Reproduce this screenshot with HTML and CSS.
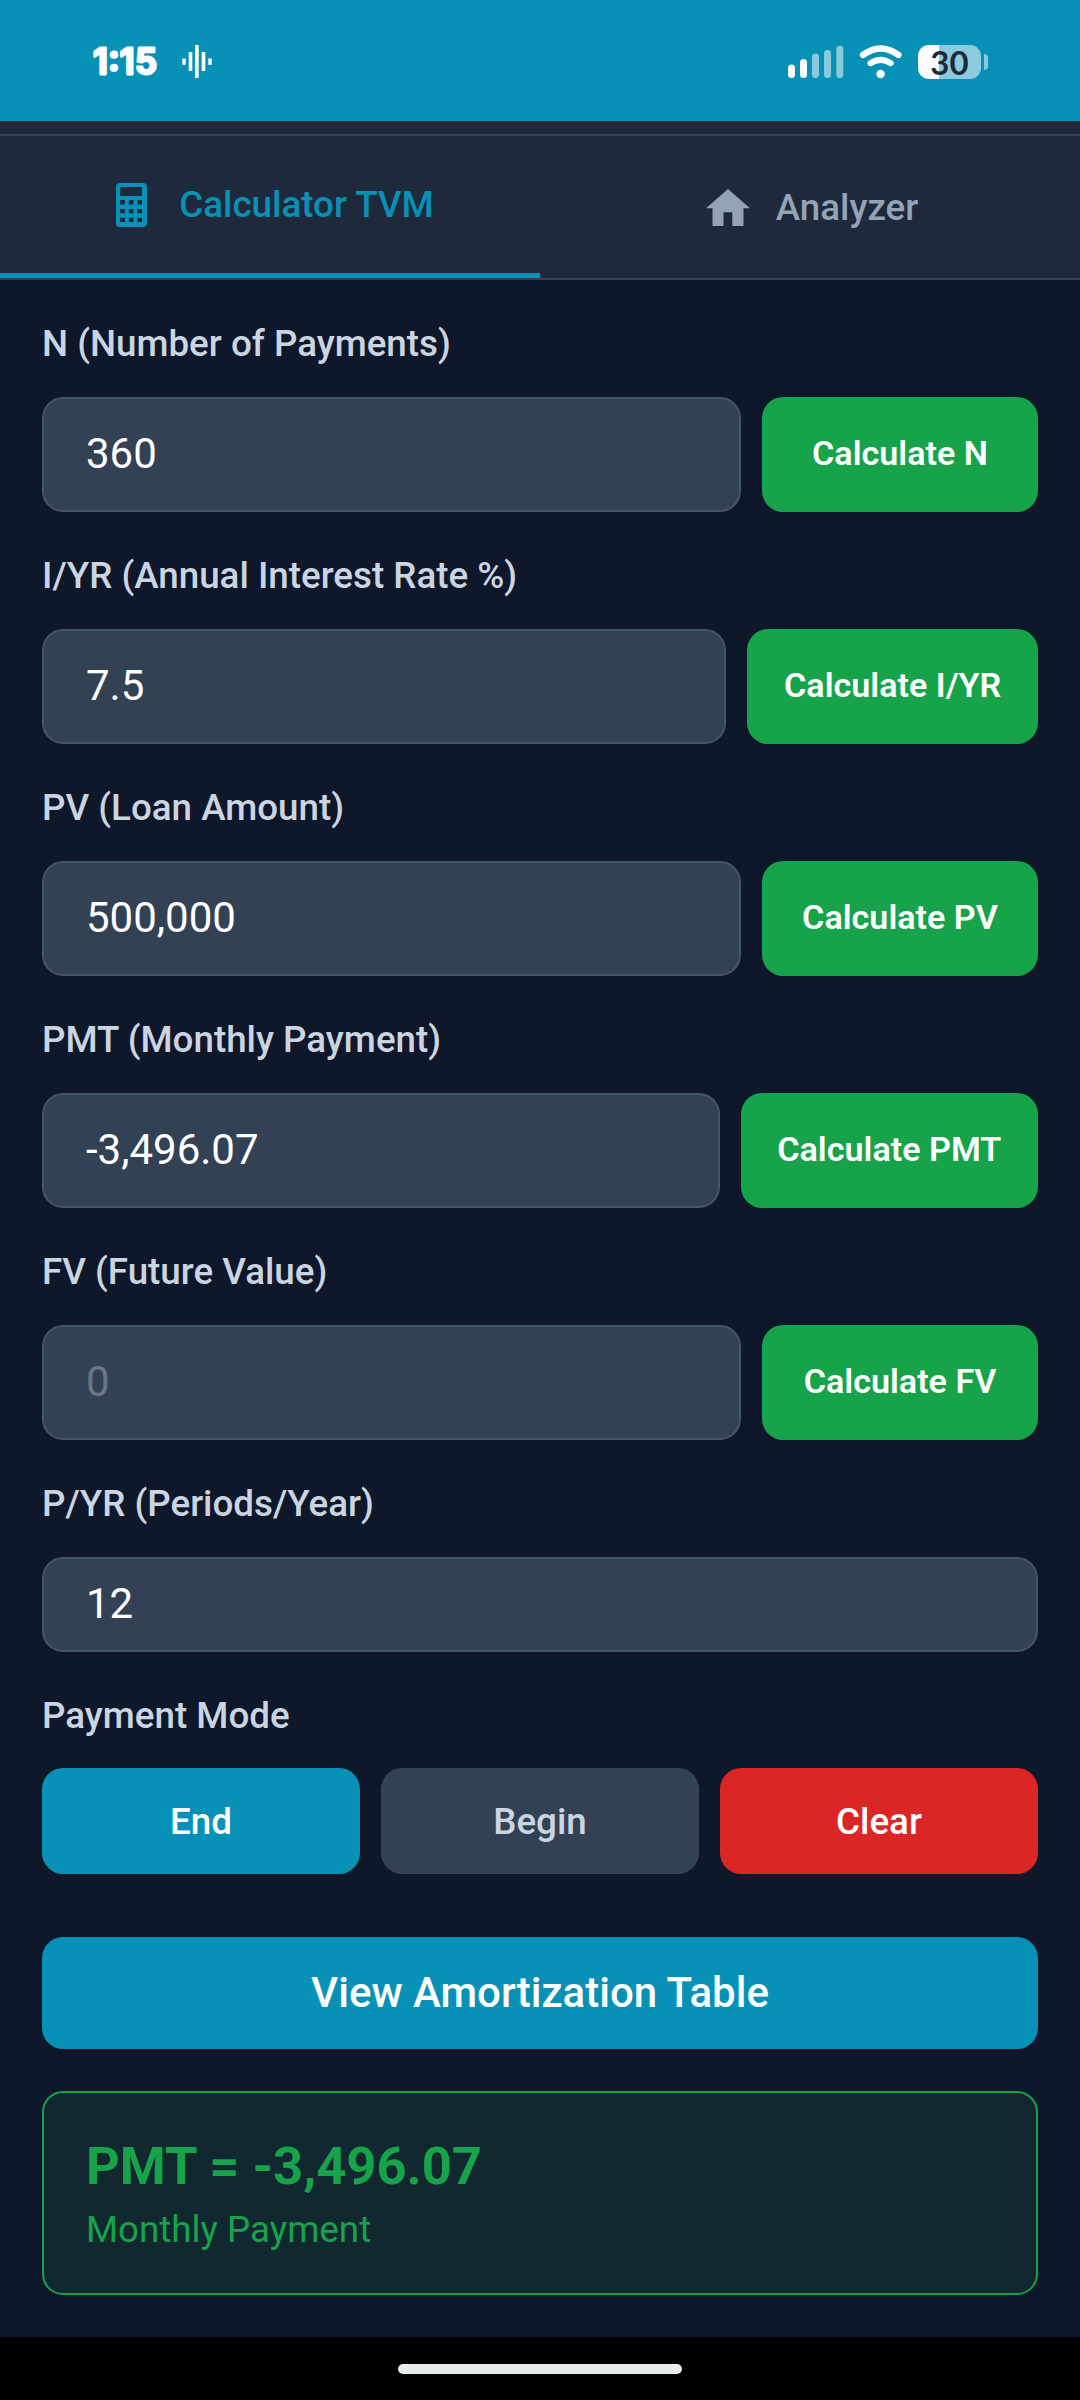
FILE: index.html
```html
<!DOCTYPE html>
<html lang="en">
<head>
<meta charset="utf-8">
<title>Calculator TVM</title>
<link rel="stylesheet" href="styles.css">
</head>
<body>
<div class="screen">
  <header class="status">
    <div class="status-left">
      <svg class="clock" width="90" height="44" viewBox="0 0 90 44"><text x="1" y="33.500" textLength="64">1:15</text></svg>
      <svg class="wave" width="30" height="34" viewBox="0 0 30 34" fill="#fff"><rect x="0.3" y="13.5" width="3.4" height="6.3"/><rect x="6.7" y="7" width="3.6" height="19"/><rect x="13" y="0" width="3.7" height="33"/><rect x="19.7" y="7" width="3.6" height="19"/><rect x="26.3" y="13.5" width="3.4" height="6.3"/></svg>
    </div>
    <div class="status-right">
      <svg width="56" height="34" viewBox="0 0 56 34" fill="#fff"><rect x="0" y="19.5" width="7" height="13.5" rx="3.5"/><rect x="12" y="14" width="7" height="19" rx="3.5"/><g opacity=".52"><rect x="24" y="8.5" width="7" height="24.5" rx="3.5"/><rect x="36" y="5" width="7" height="28" rx="3.5"/><rect x="48.3" y="0.7" width="7" height="32.3" rx="3.5"/></g></svg>
      <svg class="wifi" width="44" height="34" viewBox="0 0 44 34" fill="none" stroke="#fff" stroke-linecap="round"><path d="M4 9.8Q21.7-3 39.4 9.8" stroke-width="6.4"/><path d="M11.5 18.2Q21.7 11.5 31.7 18.2" stroke-width="6"/><circle cx="21.6" cy="29" r="4.2" fill="#fff" stroke="none"/></svg>
      <div class="battery"><div class="battery-body">30</div><i class="battery-tip"></i></div>
    </div>
  </header>
  <nav class="tabs">
    <div class="tab active">
      <svg width="31" height="44" viewBox="0 0 31 44" fill="currentColor" fill-rule="evenodd"><path d="M4 0H27Q31 0 31 4V40Q31 44 27 44H4Q0 44 0 40V4Q0 0 4 0ZM4.200 4.000V13H26V4ZM4.200 17V21.500H9V17ZM12.800 17V21.500H17.500V17ZM21.500 17V21.500H26V17ZM4.200 26V30.300H9V26ZM12.800 26V30.300H17.500V26ZM21.500 26V30.300H26V26ZM4.200 34.700V39H9V34.700ZM12.800 34.700V39H17.500V34.700ZM21.500 34.700V39H26V34.700Z"/></svg>
      <span>Calculator TVM</span>
    </div>
    <div class="tab">
      <svg class="home" width="44" height="37" viewBox="0 0 44 37" fill="currentColor"><path d="M22 0L44 19.300H37.500V37H26.300V23.300H17.500V37H6.500V19.300H0Z"/></svg>
      <span>Analyzer</span>
    </div>
  </nav>
  <main class="form">
    <label class="label">N (Number of Payments)</label>
    <div class="row"><div class="input">360</div><button class="calc">Calculate N</button></div>
    <label class="label">I/YR (Annual Interest Rate %)</label>
    <div class="row"><div class="input">7.5</div><button class="calc">Calculate I/YR</button></div>
    <label class="label">PV (Loan Amount)</label>
    <div class="row"><div class="input">500,000</div><button class="calc">Calculate PV</button></div>
    <label class="label">PMT (Monthly Payment)</label>
    <div class="row"><div class="input">-3,496.07</div><button class="calc">Calculate PMT</button></div>
    <label class="label">FV (Future Value)</label>
    <div class="row"><div class="input placeholder">0</div><button class="calc">Calculate FV</button></div>
    <label class="label">P/YR (Periods/Year)</label>
    <div class="row short"><div class="input">12</div></div>
    <label class="label mode-label">Payment Mode</label>
    <div class="modes"><button class="mode end">End</button><button class="mode begin">Begin</button><button class="mode clear">Clear</button></div>
    <button class="amort">View Amortization Table</button>
    <section class="result">
      <div class="result-value">PMT = -3,496.07</div>
      <div class="result-label">Monthly Payment</div>
    </section>
  </main>
  <footer class="navbar"><i class="handle"></i></footer>
</div>
</body>
</html>
```

FILE: styles.css
```css
* { box-sizing: border-box; }
body { margin: 0; background: #0f172a; font-family: Roboto, sans-serif; }
.screen { width: 1080px; height: 2400px; display: flex; flex-direction: column; overflow: hidden; }
svg { display: block; flex: none; }

.status { flex: none; height: 121px; padding: 3px 92px 0 92px; background: #0891b6; display: flex; justify-content: space-between; align-items: center; color: #fff; }
.status-left, .status-right { display: flex; align-items: center; }
.clock { font: 600 35px Inter, sans-serif; fill: #fff; stroke: #fff; stroke-width: 2.8px; stroke-linejoin: round; }
.wifi { margin: 0 15px; }
.battery { display: flex; align-items: center; gap: 3px; }
.battery-body { width: 63px; height: 34px; border-radius: 11px; background: linear-gradient(90deg, #fff 21px, #8bcbdd 21px); color: #1f293b; font: 700 33px/34px Lato, sans-serif; text-align: center; }
.battery-tip { width: 4px; height: 16px; border-radius: 0 4px 4px 0; background: #8bcbdd; }

.tabs { flex: none; height: 159px; padding-top: 13px; background: linear-gradient(#334155, #334155) 0 13px / 100% 2px no-repeat #1e293b; border-bottom: 2px solid #334155; display: flex; }
.tab { flex: 0 0 50%; display: flex; align-items: center; justify-content: center; gap: 32px; padding: 4px 0 0 4px; color: #94a3b8; font-size: 36.75px; font-weight: 500; line-height: 44px; }
.tab.active { padding: 2px 0 0 10px; color: #0891b6; border-bottom: 5px solid #0891b6; }
.home { margin: 0 -6px 2px 0; }

.form { flex: 1; padding: 42px 42px 0; display: flex; flex-direction: column; }
.label { color: #cbd5e1; font-size: 36.75px; font-weight: 500; line-height: 44px; margin-bottom: 31px; }
.row { display: flex; gap: 21px; height: 115px; margin-bottom: 42px; }
.row.short { height: 95px; }
.mode-label { margin-bottom: 30px; }
.input { flex: 1; padding: 0 42px 2px; display: flex; align-items: center; background: #334155; border: 2px solid #475569; border-radius: 21px; color: #fff; font-size: 42px; }
.placeholder { color: #6b7785; }
button { border: 0; padding: 0; border-radius: 21px; color: #fff; font-family: inherit; }
.calc { min-width: 276px; padding: 0 36.75px 3px; background: #16a34a; font-size: 34.125px; font-weight: 600; }
.modes { display: flex; gap: 21px; height: 106px; margin-bottom: 63px; }
.mode { flex: 1; font-size: 36.75px; font-weight: 500; }
.end { background: #0891b6; }
.begin { background: #334155; color: #cbd5e1; }
.clear { background: #dc2626; }
.amort { height: 112px; padding-bottom: 2px; margin-bottom: 42px; background: #0891b6; font-size: 42px; font-weight: 500; }
.result { height: 204px; padding: 42px; border: 2px solid #16a34a; border-radius: 21px; background: #112830; color: #16a34a; }
.result-value { font-size: 52.5px; font-weight: 700; line-height: 62px; }
.result-label { font-size: 36.75px; line-height: 44px; margin-top: 11px; }

.navbar { flex: none; height: 63px; background: #000; display: flex; justify-content: center; padding-top: 27px; }
.handle { width: 284px; height: 10px; border-radius: 5px; background: #e8eceb; }
```
